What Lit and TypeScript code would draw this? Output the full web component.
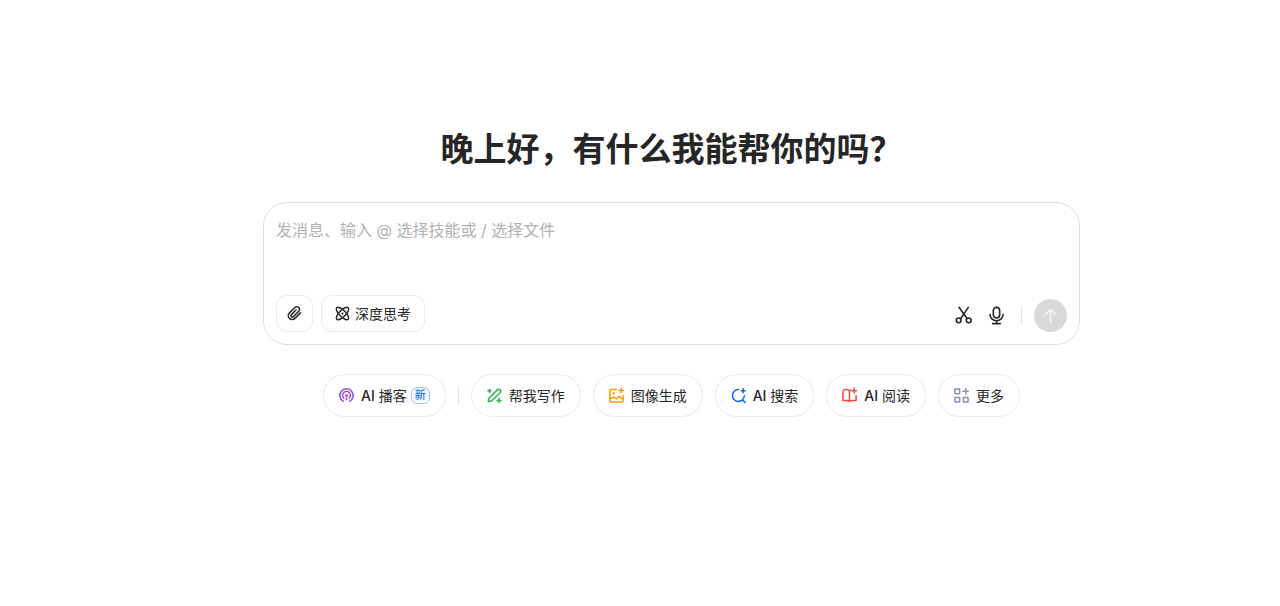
import { LitElement, html, css, svg } from "lit";
import { customElement, state } from "lit/decorators.js";

const icon = (body: unknown, cls = "icon") =>
  html`<svg class=${cls} viewBox="0 0 24 24" aria-hidden="true">${body}</svg>`;

const clip = svg`<path d="M21.500 11l-8.800 8.800a6.200 6.200 0 0 1-8.800-8.800l8.800-8.600a4.300 4.300 0 0 1 6.100 6.100l-8.600 8.500a2.300 2.300 0 0 1-3.300-3.200l7.600-7.400"/>`;
const atom = svg`<ellipse cx="12" cy="12" rx="13" ry="5.200" transform="rotate(45 12 12)"/><ellipse cx="12" cy="12" rx="13" ry="5.200" transform="rotate(-45 12 12)"/><circle class="solid" cx="12" cy="12" r="1.800"/>`;
const scissors = svg`<path d="M4.500 -1l11.500 16M18.500 -1L7.500 15"/><circle cx="4" cy="18.500" r="3.600"/><circle cx="19" cy="18.500" r="3.600"/>`;
const mic = svg`<rect x="6.500" y="-1" width="9.500" height="16" rx="4.700"/><path d="M1.500 10a9.700 9 0 0 0 19.500 0M11.300 19.500v3.500M5.500 23.500h11.500"/>`;
const arrow = svg`<path d="M11.500 21V2.500M3.500 10L11.500 2l8 8"/>`;
const podcast = svg`<path d="M7 21.300a10.700 10.700 0 1 1 10 0"/><path d="M7.400 15.800a6.200 6.200 0 1 1 9.200 0"/><circle class="solid" cx="12" cy="12" r="2.200"/><path d="M12 15.500v3"/>`;
const pencil = svg`<path d="M2 21.500l1-5L16.500 3a3 3 0 0 1 4.500 4.500L7.500 20.800zM4 2v5M1.500 4.500h5M19.300 16.500v6.500M16 19.800h6.500"/>`;
const image = svg`<path d="M12 2.500H3.500a2 2 0 0 0-2 2v16a2 2 0 0 0 2 2h17a2 2 0 0 0 2-2V12M2 17.500l5.500-3 4.500 3 4-4 6 4.500M19.500 0v7.500M15.800 3.800h7.500"/><circle class="solid" cx="7.500" cy="8.500" r="1.900"/>`;
const search = svg`<path d="M12 2.500a9.500 9.500 0 1 0 9.300 10M18.500 19l4 4M19.500 1v6.500M16.300 4.300h6.500"/>`;
const book = svg`<path d="M12 21.500V6.500A4 4 0 0 0 8 2.500H5.500a4 4 0 0 0-4 4V20H9l3 1.500 3-1.500h7.500v-7.500M12 6.500a4.500 4.500 0 0 1 1.500-3.500M19.500 0.500v7.500M15.800 4.300h7.500"/>`;
const grid = svg`<rect x="1.500" y="1.500" width="7.500" height="7.500" rx="1"/><rect x="1.500" y="15" width="7.500" height="7.500" rx="1"/><rect x="15" y="15" width="7.500" height="7.500" rx="1"/><path d="M18.800 1v8.500M14.500 5.300h8.500"/>`;

const skills = [
  { prefix: "AI", label: "播客", art: podcast, tone: "purple", isNew: true },
  { label: "帮我写作", art: pencil, tone: "green" },
  { label: "图像生成", art: image, tone: "orange" },
  { prefix: "AI", label: "搜索", art: search, tone: "blue" },
  { prefix: "AI", label: "阅读", art: book, tone: "red" },
  { label: "更多", art: grid, tone: "slate" },
];

@customElement("app-root")
export class AppRoot extends LitElement {
  @state() private draft = "";

  static styles = css`
    :host {
      display: block;
      min-height: 100vh;
      box-sizing: border-box;
      background: #fff;
      color: #262626;
      font-family: Inter, "Noto Sans CJK SC", sans-serif;
    }
    * { box-sizing: border-box; }
    .page {
      display: flex;
      flex-direction: column;
      align-items: center;
      padding: 123px 16px 32px 79px;
    }
    .title {
      margin: 0 0 31px;
      font: 700 33px/48px "Noto Sans CJK SC", sans-serif;
    }
    .composer {
      width: 100%;
      max-width: 817px;
      display: flex;
      flex-direction: column;
      padding: 12px;
      border: 1px solid #dedede;
      border-radius: 24px;
    }
    .input {
      display: block;
      width: 100%;
      height: 80px;
      padding: 3px 0;
      border: 0;
      outline: 0;
      resize: none;
      background: none;
      color: inherit;
      font: 400 16px/24px Inter, "Noto Sans CJK SC", sans-serif;
    }
    .input::placeholder { color: #b2b2b2; opacity: 1; }
    .toolbar { display: flex; align-items: flex-end; justify-content: space-between; }
    .group { display: flex; align-items: center; gap: 8px; }
    button {
      display: flex;
      align-items: center;
      justify-content: center;
      margin: 0;
      padding: 0;
      border: 0;
      background: none;
      color: inherit;
      font: 400 14px/20px Inter, "Noto Sans CJK SC", sans-serif;
      white-space: nowrap;
      cursor: pointer;
    }
    .tool { height: 37px; min-width: 37px; border: 1px solid #ebebeb; border-radius: 11px; }
    .think { gap: 5px; padding: 0 13px; }
    .plain { width: 33px; height: 33px; }
    .actions { display: flex; align-items: center; }
    .rule { width: 1px; height: 19px; background: #e5e5e5; }
    .actions .rule { margin: 0 12px 0 8px; }
    .send { width: 33px; height: 33px; border-radius: 50%; background: #d9d9d9; color: #f4f4f4; }
    .icon {
      flex: none;
      width: 16px;
      height: 16px;
      fill: none;
      stroke: currentColor;
      stroke-width: 2.4;
      stroke-linecap: round;
      stroke-linejoin: round;
      overflow: visible;
    }
    .small { width: 15px; height: 15px; }
    .solid { fill: currentColor; stroke: none; }
    .skills {
      display: flex;
      flex-wrap: wrap;
      align-items: center;
      justify-content: center;
      gap: 12px;
      margin: 0;
      padding: 29px 0 0;
      list-style: none;
    }
    .item { display: flex; align-items: center; gap: 12px; }
    .pill { height: 43px; gap: 7px; padding: 0 15px; border: 1px solid #ebebeb; border-radius: 22px; }
    .prefix { font-weight: 500; }
    .badge {
      margin-left: -3px;
      padding: 0 3px;
      border: 1px solid #a3c4ff;
      border-radius: 6px;
      background: #f5f9ff;
      color: #2878ff;
      font-size: 11px;
      line-height: 15px;
      font-weight: 500;
    }
    .purple { color: #9146e8; }
    .green { color: #25b34b; }
    .orange { color: #ff9500; }
    .blue { color: #0f62fe; }
    .red { color: #f5483b; }
    .slate { color: #8790b0; }
  `;

  render() {
    return html`
      <main class="page">
        <h1 class="title">晚上好，有什么我能帮你的吗？</h1>
        <form class="composer" @submit=${(e: Event) => e.preventDefault()}>
          <textarea
            class="input"
            aria-label="发消息"
            placeholder="发消息、输入 @ 选择技能或 / 选择文件"
            .value=${this.draft}
            @input=${(e: Event) => (this.draft = (e.target as HTMLTextAreaElement).value)}
          ></textarea>
          <div class="toolbar">
            <div class="group">
              <button class="tool" type="button" aria-label="附件">${icon(clip, "icon small")}</button>
              <button class="tool think" type="button">${icon(atom, "icon small")}<span>深度思考</span></button>
            </div>
            <div class="actions">
              <button class="plain" type="button" aria-label="截图">${icon(scissors)}</button>
              <button class="plain" type="button" aria-label="语音">${icon(mic)}</button>
              <span class="rule"></span>
              <button class="send" type="submit" aria-label="发送">${icon(arrow)}</button>
            </div>
          </div>
        </form>
        <ul class="skills">
          ${skills.map(
            (s) => html`<li class="item">
              <button class="pill" type="button">
                ${icon(s.art, `icon small ${s.tone}`)}
                <span>${s.prefix ? html`<span class="prefix">${s.prefix}</span> ` : ""}${s.label}</span>
                ${s.isNew ? html`<span class="badge">新</span>` : ""}
              </button>
              ${s.isNew ? html`<span class="rule"></span>` : ""}
            </li>`
          )}
        </ul>
      </main>
    `;
  }
}
